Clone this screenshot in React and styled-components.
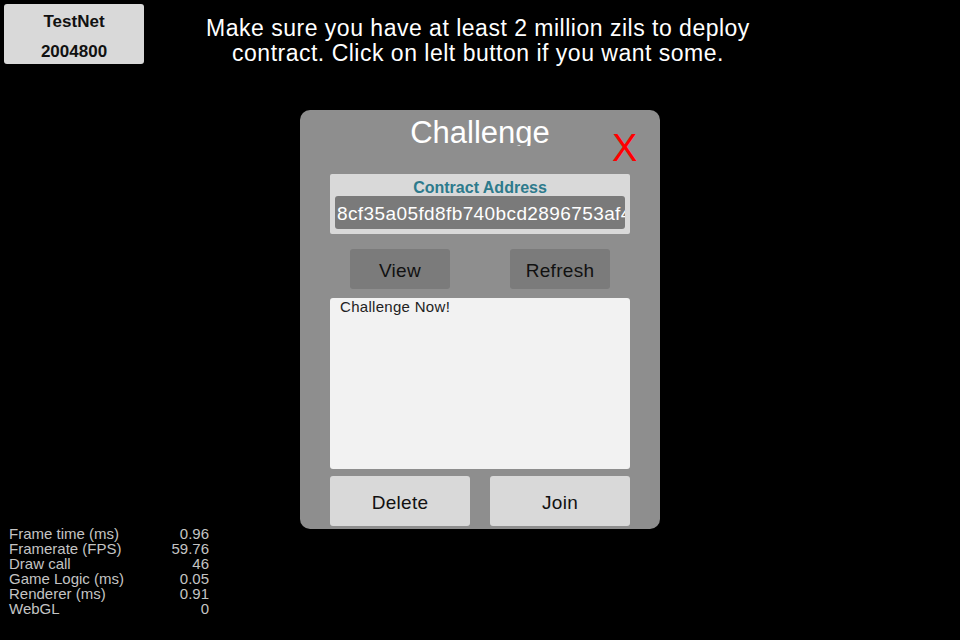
import React from "react";
import styled, { createGlobalStyle } from "styled-components";

const Global = createGlobalStyle`
  html, body { margin: 0; padding: 0; background: #000; }
  body { font-family: "Liberation Sans", Arial, sans-serif; }
  * { box-sizing: border-box; }
`;

const Screen = styled.div`
  position: relative;
  width: 960px;
  height: 640px;
  background: #000;
  overflow: hidden;
  display: flex;
  flex-direction: column;
`;

const TopRow = styled.div`
  display: flex;
  align-items: flex-start;
  padding: 4px;
  height: 64px;
`;

const NetBox = styled.div`
  width: 140px;
  height: 60px;
  background: #d9d9d9;
  border-radius: 3px;
  padding-top: 3px;
  text-align: center;
  font-size: 17px;
  font-weight: bold;
  line-height: 30px;
  color: #111;
`;

const Notice = styled.div`
  width: 580px;
  margin-left: 44px;
  margin-top: 12px;
  color: #fff;
  font-size: 23px;
  letter-spacing: 0.5px;
  line-height: 25px;
  text-align: center;
`;

const Modal = styled.div`
  position: relative;
  margin: 46px auto 0;
  width: 360px;
  height: 419px;
  background: #8e8e8e;
  border-radius: 10px;
  padding: 0 30px 3px;
  display: flex;
  flex-direction: column;
`;

const TitleBar = styled.div`
  height: 36px;
  overflow: hidden;
  padding-top: 8px;
  text-align: center;
  color: #fff;
  font-size: 31px;
  line-height: 30px;
`;

const Close = styled.div`
  position: absolute;
  left: 312px;
  top: 19px;
  color: #ff0000;
  font-size: 38px;
  line-height: 38px;
  cursor: pointer;
`;

const AddressBox = styled.div`
  margin-top: 28px;
  height: 60px;
  background: #d9d9d9;
  border-radius: 2px;
  padding: 0 5px 5px;
  display: flex;
  flex-direction: column;
`;

const AddressLabel = styled.div`
  height: 22px;
  padding-top: 5px;
  line-height: 18px;
  text-align: center;
  font-size: 16px;
  font-weight: bold;
  color: #2d7a8c;
`;

const AddressField = styled.div`
  height: 33px;
  padding: 2px 0 0 2px;
  line-height: 31px;
  background: #7a7a7a;
  border-radius: 3px;
  color: #fff;
  font-size: 19px;
  letter-spacing: 0.4px;
  white-space: nowrap;
  overflow: hidden;
`;

const ActionRow = styled.div`
  display: flex;
  justify-content: space-between;
  padding: 0 20px;
  margin-top: ${(p) => p.$top}px;
`;

const Button = styled.div`
  width: ${(p) => p.$w}px;
  height: ${(p) => p.$h}px;
  padding-top: 3px;
  line-height: ${(p) => p.$h - 3}px;
  background: ${(p) => p.$bg};
  border-radius: 3px;
  text-align: center;
  font-size: 19px;
  letter-spacing: 0.3px;
  color: #111;
  cursor: pointer;
`;

const BottomRow = styled(ActionRow)`
  padding: 0;
`;

const MessageArea = styled.div`
  margin-top: 9px;
  height: 171px;
  background: #f2f2f2;
  border-radius: 3px;
  padding: 1px 10px;
  font-size: 15px;
  letter-spacing: 0.3px;
  line-height: 16px;
  color: #222;
`;

const Stats = styled.div`
  position: absolute;
  left: 9px;
  top: 526px;
  width: 200px;
  display: grid;
  grid-template-columns: 1fr auto;
  font-size: 15px;
  line-height: 15px;
  color: #c4c4c4;
`;

const StatValue = styled.span`
  text-align: right;
`;

const stats = [
  ["Frame time (ms)", "0.96"],
  ["Framerate (FPS)", "59.76"],
  ["Draw call", "46"],
  ["Game Logic (ms)", "0.05"],
  ["Renderer (ms)", "0.91"],
  ["WebGL", "0"],
];

export default function App() {
  return (
    <Screen>
      <Global />
      <TopRow>
        <NetBox>
          <div>TestNet</div>
          <div>2004800</div>
        </NetBox>
        <Notice>
          Make sure you have at least 2 million zils to deploy
          <br />
          contract. Click on lelt button if you want some.
        </Notice>
      </TopRow>
      <Modal>
        <TitleBar>Challenge</TitleBar>
        <Close>X</Close>
        <AddressBox>
          <AddressLabel>Contract Address</AddressLabel>
          <AddressField>8cf35a05fd8fb740bcd2896753af4e1c09b2d7f3</AddressField>
        </AddressBox>
        <ActionRow $top={15}>
          <Button $w={100} $h={40} $bg="#7b7b7b">View</Button>
          <Button $w={100} $h={40} $bg="#7b7b7b">Refresh</Button>
        </ActionRow>
        <MessageArea>Challenge Now!</MessageArea>
        <BottomRow $top={7}>
          <Button $w={140} $h={50} $bg="#d9d9d9">Delete</Button>
          <Button $w={140} $h={50} $bg="#d9d9d9">Join</Button>
        </BottomRow>
      </Modal>
      <Stats>
        {stats.map(([k, v]) => (
          <React.Fragment key={k}>
            <span>{k}</span>
            <StatValue>{v}</StatValue>
          </React.Fragment>
        ))}
      </Stats>
    </Screen>
  );
}
